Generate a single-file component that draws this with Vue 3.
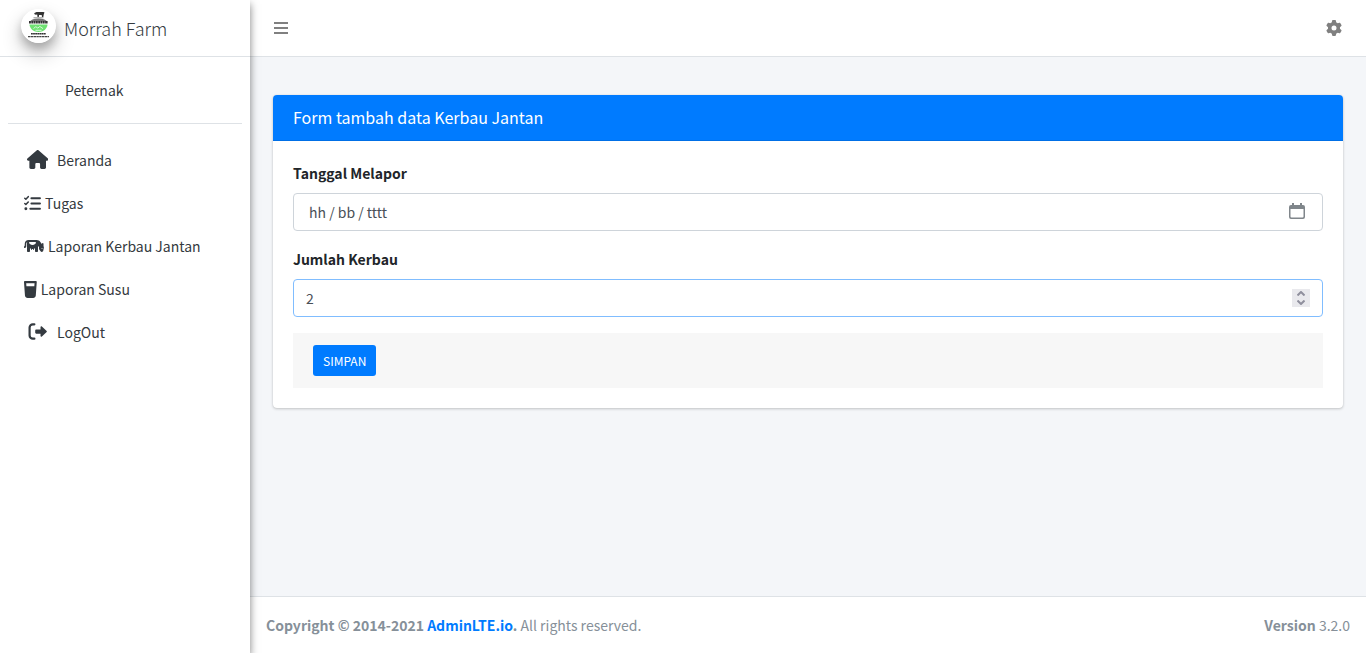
<script setup>
import { ref } from 'vue'

const tanggal = ref('')
const jumlah = ref(2)
const menu = [
  { label: 'Beranda', icon: 'home', wide: true },
  { label: 'Tugas', icon: 'tasks' },
  { label: 'Laporan Kerbau Jantan', icon: 'cow' },
  { label: 'Laporan Susu', icon: 'glass' },
  { label: 'LogOut', icon: 'logout', wide: true },
]
</script>

<template>
  <div class="wrapper">
    <aside class="sidebar">
      <a href="#" class="brand">
        <svg class="brand-logo" viewBox="0 0 34 34" aria-hidden="true">
          <circle cx="17" cy="17" r="17" fill="#fff" />
          <path d="M13 4l2-.9h7l1 .5-.7 1.600-.5 2.800h-1.300l-.3-2h-2.600l-.3 2h-1.300l-.3-2.400-1.500.2-1.500-.7z" fill="#333" />
          <path d="M12 8.800h10" stroke="#777" stroke-width=".8" />
          <path d="M8.500 12.500c1-1.900 4.300-3 8.500-3s7.500 1.100 8.500 3z" fill="#777" />
          <path d="M7.500 13.200h19" stroke="#333" stroke-width="2.600" stroke-dasharray="1.900 .4" />
          <path d="M8 15.600h18c-.5 4.600-4 7.400-9 7.400s-8.500-2.800-9-7.400z" fill="#6fe272" />
          <path d="M12 19.500l2.300-1.800 2 1.400 2-1.700 3.200 2.200M14 21.300h6" fill="none" stroke="#d9f8da" stroke-width="1" />
          <path d="M9.500 24.700h15" stroke="#333" stroke-width="1.500" stroke-dasharray="1.800 .3" />
          <path d="M6.500 27.600h21" stroke="#444" stroke-width="1.100" stroke-dasharray="2.400 .4" />
        </svg>
        <span class="brand-text">Morrah Farm</span>
      </a>
      <div class="user-panel"><a href="#">Peternak</a></div>
      <nav class="menu">
        <a v-for="item in menu" :key="item.label" href="#" class="menu-link">
          <span :class="['menu-icon', item.icon, { wide: item.wide }]">
            <svg v-if="item.icon === 'home'" viewBox="0 0 576 512"><path d="M575.8 255.500c0 18-15 32.100-32 32.100h-32l.7 160.200c0 2.700-.2 5.400-.5 8.100V472c0 22.100-17.900 40-40 40H392c-22.100 0-40-17.900-40-40v-88c0-17.700-14.300-32-32-32h-64c-17.700 0-32 14.300-32 32v88c0 22.100-17.900 40-40 40h-80c-22.100 0-40-17.900-40-40V287.600H32c-18 0-32-14-32-32.100 0-9 3-17 10-24L266.400 8c7-7 15-8 22-8s15 2 21 7l255.400 224.500c8 7 12 15 11 24z" /></svg>
            <svg v-else-if="item.icon === 'tasks'" viewBox="0 0 512 512">
              <g fill="none" stroke="currentColor" stroke-linecap="round" stroke-linejoin="round">
                <path d="M24 96l32 32 72-78M24 256l32 32 72-78" stroke-width="46" />
                <path d="M224 96h256M224 256h256M192 416h288" stroke-width="62" />
              </g>
              <circle cx="56" cy="416" r="44" />
            </svg>
            <svg v-else-if="item.icon === 'cow'" viewBox="0 0 640 512"><path d="M96 224v32V416c0 17.700 14.300 32 32 32h32c17.700 0 32-14.300 32-32V327.800c9.900 6.600 20.600 12 32 16.100V368c0 8.800 7.200 16 16 16s16-7.200 16-16V351.100c5.300 .6 10.600 .9 16 .9s10.700-.3 16-.9V368c0 8.800 7.200 16 16 16s16-7.200 16-16V343.800c11.400-4 22.100-9.400 32-16.100V416c0 17.700 14.300 32 32 32h32c17.700 0 32-14.300 32-32V256l32 32v49.500c0 9.500 2.800 18.700 8.100 26.600L530 427c8.800 13.100 23.500 21 39.300 21c22.500 0 41.900-15.900 46.300-38l20.300-101.600c2.600-13-.3-26.500-8-37.300l-3.900-5.500V184c0-13.300-10.700-24-24-24s-24 10.700-24 24v14.400l-52.900-74.100C496 86.500 452.400 64 405.900 64H272 256 192 144C77.700 64 24 117.700 24 184v54C9.400 249.800 0 267.800 0 288v17.600c0 8 6.400 14.400 14.400 14.400C46.200 320 72 294.200 72 262.400V256 224 184c0-24.300 12.100-45.800 30.500-58.900C98.300 135.900 96 147.700 96 160v64zM560 336a16 16 0 1 1 32 0 16 16 0 1 1 -32 0zM166.600 166.600c-4.200-4.200-6.600-10-6.600-16c0-12.500 10.100-22.600 22.600-22.600H361.400c12.500 0 22.600 10.100 22.600 22.600c0 6-2.400 11.800-6.600 16l-23.400 23.400C332.200 211.800 302.700 224 272 224s-60.200-12.200-81.900-33.900l-23.400-23.400z" /></svg>
            <svg v-else-if="item.icon === 'glass'" viewBox="0 0 384 512"><path fill-rule="evenodd" d="M32 0C23.100 0 14.600 3.700 8.600 10.200S-.6 25.400 0 34.300L28.900 437.700c3 41.900 37.800 74.300 79.800 74.300h166.600c42 0 76.800-32.400 79.800-74.300L384 34.300c.6-8.900-2.400-17.600-8.500-24.100S360.900 0 352 0H32zM73 160L66.400 64h251.200L311 160z" /></svg>
            <svg v-else viewBox="0 0 576 512">
              <path d="M192 40h-48c-53 0-96 43-96 96v240c0 53 43 96 96 96h48" fill="none" stroke="currentColor" stroke-width="66" stroke-linecap="round" />
              <path d="M562 273L418 409c-15 15-41 4-41-17v-72H249c-18 0-32-14-32-32v-64c0-18 14-32 32-32h128v-72c0-21 26-32 41-17l144 136c9 10 9 24 0 34z" />
            </svg>
          </span>
          <span>{{ item.label }}</span>
        </a>
      </nav>
    </aside>

    <div class="page">
      <header class="topbar">
        <button type="button" class="icon-button" aria-label="Menu">
          <svg width="14" height="16" viewBox="0 0 14 16"><path d="M0 3h14M0 8h14M0 13h14" stroke="currentColor" stroke-width="2" /></svg>
        </button>
        <button type="button" class="icon-button" aria-label="Pengaturan">
          <svg width="16" height="16" viewBox="0 0 512 512"><path fill="currentColor" d="M495.900 166.600c3.200 8.700 .5 18.400-6.400 24.600l-43.300 39.400c1.100 8.300 1.700 16.800 1.700 25.400s-.6 17.100-1.700 25.400l43.300 39.400c6.900 6.200 9.600 15.900 6.400 24.600c-4.400 11.900-9.700 23.300-15.800 34.300l-4.700 8.100c-6.600 11-14 21.400-22.100 31.200c-5.900 7.200-15.700 9.600-24.500 6.800l-55.700-17.700c-13.400 10.300-28.200 18.900-44 25.400l-12.500 57.100c-2 9.100-9 16.300-18.200 17.800c-13.800 2.300-28 3.500-42.500 3.500s-28.700-1.200-42.500-3.500c-9.200-1.500-16.200-8.700-18.200-17.800l-12.500-57.100c-15.800-6.500-30.600-15.100-44-25.400L83.100 425.900c-8.800 2.800-18.600 .3-24.500-6.800c-8.100-9.800-15.500-20.200-22.100-31.200l-4.700-8.100c-6.100-11-11.400-22.400-15.800-34.300c-3.200-8.700-.5-18.400 6.400-24.600l43.300-39.400C64.600 273.100 64 264.600 64 256s.6-17.100 1.700-25.400L22.400 191.200c-6.900-6.200-9.600-15.900-6.400-24.600c4.400-11.900 9.700-23.300 15.800-34.300l4.700-8.100c6.600-11 14-21.400 22.100-31.200c5.900-7.200 15.700-9.600 24.500-6.800l55.700 17.700c13.400-10.300 28.200-18.900 44-25.400l12.500-57.100c2-9.100 9-16.300 18.200-17.800C227.300 1.200 241.500 0 256 0s28.700 1.200 42.500 3.500c9.200 1.500 16.200 8.700 18.200 17.800l12.500 57.100c15.800 6.500 30.600 15.100 44 25.400l55.700-17.700c8.800-2.800 18.600-.3 24.500 6.800c8.100 9.800 15.500 20.200 22.100 31.200l4.700 8.100c6.100 11 11.400 22.400 15.800 34.300zM256 336a80 80 0 1 0 0-160 80 80 0 1 0 0 160z" /></svg>
        </button>
      </header>

      <main class="content">
        <section class="card">
          <h3 class="card-title">Form tambah data Kerbau Jantan</h3>
          <form class="card-body" @submit.prevent>
            <label for="tanggal">Tanggal Melapor</label>
            <div class="field">
              <input id="tanggal" v-model="tanggal" class="date" type="text" placeholder="hh / bb / tttt">
              <button type="button" class="calendar" aria-label="Pilih tanggal">
                <svg width="16" height="16" viewBox="0 0 16 16">
                  <path d="M3 0h2v2h6V0h2v2h1a2 2 0 0 1 2 2v10a2 2 0 0 1-2 2H2a2 2 0 0 1-2-2V4a2 2 0 0 1 2-2h1zM1.500 6v7.500q0 1 1 1h11q1 0 1-1V6z" fill="currentColor" fill-rule="evenodd" />
                </svg>
              </button>
            </div>
            <label for="jumlah">Jumlah Kerbau</label>
            <div class="field">
              <input id="jumlah" v-model="jumlah" class="number" type="number">
              <div class="spinner">
                <button type="button" aria-label="Tambah" @click="jumlah++"><svg width="8" height="5" viewBox="0 0 8 5"><path d="M.5 4.500l3.500-3.500 3.500 3.500" /></svg></button>
                <button type="button" aria-label="Kurangi" @click="jumlah--"><svg width="8" height="5" viewBox="0 0 8 5"><path d="M.5 .5l3.500 3.500 3.500-3.500" /></svg></button>
              </div>
            </div>
            <div class="card-footer"><button type="submit" class="save">SIMPAN</button></div>
          </form>
        </section>
      </main>

      <footer class="footer">
        <div><strong>Copyright © 2014-2021 <a href="#">AdminLTE.io</a>.</strong> All rights reserved.</div>
        <div><b>Version</b> 3.2.0</div>
      </footer>
    </div>
  </div>
</template>

<style>
body {
  margin: 0;
}
</style>

<style scoped>
.wrapper {
  display: flex;
  min-height: 100vh;
  font-family: "Noto Sans CJK SC", "Open Sans", sans-serif;
  font-size: 14px;
  line-height: 24px;
  color: #212529;
  background: #f4f6f9;
}
.wrapper *,
.wrapper {
  box-sizing: border-box;
}
a {
  color: inherit;
  text-decoration: none;
}
button,
input {
  font: inherit;
}
button {
  padding: 0;
  border: 0;
  background: none;
  cursor: pointer;
}
svg {
  display: block;
}
.sidebar {
  position: relative;
  z-index: 1;
  flex: 0 0 250px;
  color: #343a40;
  background: #fff;
  box-shadow: 0 4px 8px rgba(0, 0, 0, 0.5);
}
.brand {
  display: flex;
  align-items: center;
  gap: 8px;
  height: 57px;
  padding: 0 8px 4px 21px;
  border-bottom: 1px solid #dee2e6;
}
.brand-logo {
  width: 35px;
  height: 34px;
  border-radius: 50%;
  box-shadow: 0 10px 20px rgba(0, 0, 0, 0.24), 0 6px 10px rgba(0, 0, 0, 0.2);
}
.brand-text {
  padding-top: 4px;
  font-size: 18px;
  font-weight: 300;
  color: #343a40;
}
.user-panel {
  margin: 0 8px;
  padding: 21px 0 21px 57px;
  border-bottom: 1px solid #dee2e6;
}
.menu {
  display: flex;
  flex-direction: column;
  gap: 3px;
  padding: 16px 8px;
}
.menu-link {
  display: flex;
  align-items: center;
  gap: 4px;
  height: 40px;
  padding: 0 16px;
}
.menu-icon svg {
  height: 16px;
  fill: currentColor;
}
.menu-icon.tasks svg {
  height: 17px;
}
.menu-icon.glass svg {
  height: 17px;
}
.menu-icon.wide {
  display: flex;
  justify-content: center;
  width: 27px;
  margin-right: 2px;
  padding-bottom: 2px;
}
.menu-icon.home svg {
  height: 19px;
}
.menu-icon.logout svg {
  height: 17px;
}
.page {
  display: flex;
  flex: 1;
  flex-direction: column;
  min-width: 0;
}
.topbar {
  display: flex;
  align-items: center;
  justify-content: space-between;
  height: 57px;
  padding: 0 24px;
  border-bottom: 1px solid #dee2e6;
  background: #fff;
}
.icon-button {
  color: #808080;
}
.content {
  flex: 1;
  padding: 38px 23px;
}
.card {
  border-radius: 4px;
  background: #fff;
  box-shadow: 0 0 1px rgba(0, 0, 0, 0.13), 0 1px 3px rgba(0, 0, 0, 0.2);
}
.card-title {
  margin: 0;
  padding: 10px 20px 11px;
  border-bottom: 1px solid #006fe6;
  border-radius: 4px 4px 0 0;
  font-size: 16px;
  font-weight: 400;
  color: #fff;
  background: #007bff;
}
.card-body {
  padding: 20px;
}
label {
  display: block;
  margin-bottom: 8px;
  font-weight: 700;
}
.field {
  position: relative;
  margin-bottom: 16px;
}
.field input {
  display: block;
  width: 100%;
  height: 38px;
  padding: 6px 12px;
  border: 1px solid #ced4da;
  border-radius: 4px;
  outline: 0;
  color: #495057;
  background: #fff;
  appearance: textfield;
}
.field input.date {
  padding-left: 15px;
}
.field input::placeholder {
  color: #495057;
  opacity: 1;
}
.field input.number {
  border-color: #80bdff;
}
.number::-webkit-inner-spin-button {
  display: none;
}
.calendar {
  position: absolute;
  top: 10px;
  right: 18px;
  color: #80868b;
}
.spinner {
  position: absolute;
  top: 10px;
  right: 13px;
  display: grid;
  width: 18px;
  height: 18px;
  background: #e9e9ed;
}
.spinner button {
  display: grid;
  place-items: center;
}
.spinner path {
  fill: none;
  stroke: #8f8f9d;
  stroke-width: 2;
}
.card-footer {
  padding: 12px 20px;
  background: #f7f7f7;
}
.save {
  display: block;
  height: 31px;
  padding: 0 10px;
  border-radius: 3px;
  font-size: 12px;
  color: #fff;
  background: #007bff;
}
.footer {
  display: flex;
  justify-content: space-between;
  padding: 16px;
  border-top: 1px solid #dee2e6;
  color: #869099;
  background: #fff;
}
.footer a {
  color: #007bff;
}
</style>
